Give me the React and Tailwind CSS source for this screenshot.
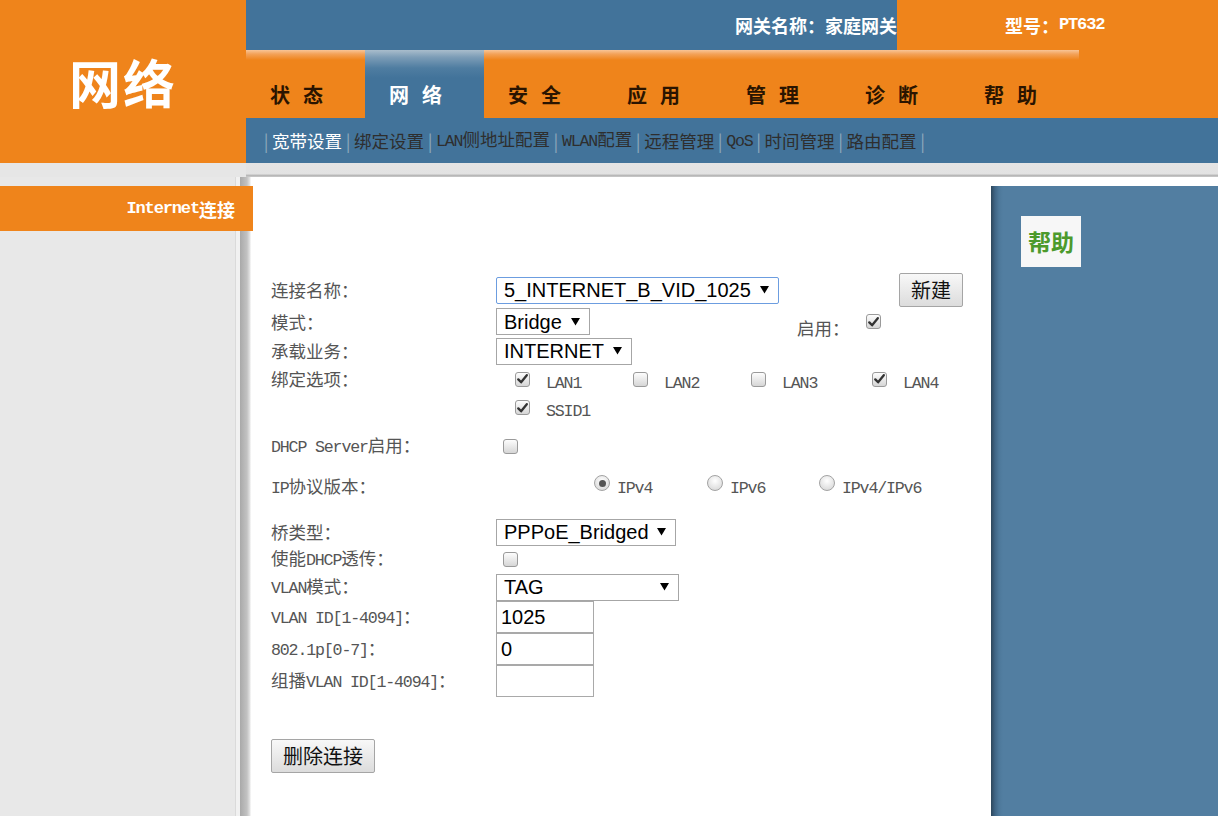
import React from "react";

function Mix({ t }) {
  const parts = t.match(/[\x00-\x7F]+|[^\x00-\x7F]+/g) || [];
  return (
    <>
      {parts.map((p, i) =>
        /^[\x00-\x7F]/.test(p) ? (
          <span key={i} className="font-['Liberation_Mono',monospace] text-[0.95em] tracking-[-0.07em] whitespace-pre">
            {p}
          </span>
        ) : (
          <span key={i}>{p}</span>
        )
      )}
    </>
  );
}

function Cb({ on }) {
  return (
    <span className="inline-flex w-[15px] h-[15px] shrink-0 rounded-[3px] border border-[#9a9a9a] bg-[linear-gradient(to_bottom,#fdfdfd,#d6d6d6)] items-center justify-center">
      {on && (
        <svg width="11" height="10" viewBox="0 0 11 10">
          <path d="M1.3 5.4 L4.1 8.3 L9.8 1.2" stroke="#333" strokeWidth="2.3" fill="none" strokeLinecap="round" strokeLinejoin="round" />
        </svg>
      )}
    </span>
  );
}

function Radio({ on }) {
  return (
    <span className="inline-flex w-[16px] h-[16px] shrink-0 rounded-full border border-[#a3a3a3] bg-[radial-gradient(circle_at_50%_35%,#ffffff,#d2d2d2)] items-center justify-center">
      {on && <span className="w-[7px] h-[7px] rounded-full bg-[#555]" />}
    </span>
  );
}

function Arrow() {
  return (
    <svg width="9" height="8" viewBox="0 0 9 8" className="shrink-0">
      <polygon points="0,0 9,0 4.5,7.5" fill="#000" />
    </svg>
  );
}

function Sel({ w, text, focus }) {
  return (
    <div
      className={
        (focus ? "border-[#6c9de0] rounded-[2px] " : "border-[#a6a6a6] ") +
        w +
        " h-[27px] border bg-white flex items-center justify-between pl-[7px] pr-[9px] font-['Liberation_Sans',Arial,sans-serif] text-[20px] leading-none text-black"
      }
    >
      <span>{text}</span>
      <Arrow />
    </div>
  );
}

function Btn({ children }) {
  return (
    <div className="h-[34px] px-[11px] flex items-center border border-[#a5a5a5] rounded-[2px] bg-[linear-gradient(to_bottom,#f8f8f8,#dcdcdc)] text-[20px] leading-none text-[#111] font-['Noto_Sans_CJK_SC',sans-serif]">
      {children}
    </div>
  );
}

function Label({ t }) {
  return (
    <div className="w-[225px] shrink-0 text-[17.5px] leading-none text-[#555] whitespace-nowrap">
      <Mix t={t} />
    </div>
  );
}

function Opt({ t }) {
  return (
    <span className="text-[17.5px] leading-none text-[#555] mt-[6px] whitespace-nowrap">
      <Mix t={t} />
    </span>
  );
}

function Inp({ v }) {
  return (
    <div className="w-[98px] h-[32px] border border-[#a9a9a9] bg-white flex items-center pl-[4px] font-['Liberation_Sans',Arial,sans-serif] text-[20px] leading-none text-black">
      {v}
    </div>
  );
}

const tabs = ["状态", "网络", "安全", "应用", "管理", "诊断", "帮助"];
const subs = ["宽带设置", "绑定设置", "LAN侧地址配置", "WLAN配置", "远程管理", "QoS", "时间管理", "路由配置"];

export default function App() {
  return (
    <div className="w-[1218px] h-[816px] overflow-hidden bg-[#e8e8e8] font-['Noto_Sans_CJK_SC',sans-serif]">
      {/* Header */}
      <div className="flex h-[163px]">
        <div className="w-[246px] shrink-0 bg-[#ef841b] flex items-center justify-center">
          <span className="text-white text-[52px] font-bold leading-none tracking-[2px]">网络</span>
        </div>
        <div className="flex-1 flex flex-col">
          <div className="flex h-[50px]">
            <div className="w-[651px] bg-[#42739a] flex items-center justify-end text-white text-[18px] font-bold leading-none">
              网关名称：家庭网关
            </div>
            <div className="flex-1 bg-[#ef841b] flex items-center pl-[108px] text-white text-[18px] font-bold leading-none">
              <Mix t="型号：PT632" />
            </div>
          </div>
          <div className="flex h-[68px] bg-[#ef841b]">
            {tabs.map((t, i) => (
              <div
                key={t}
                className={
                  i === 1
                    ? "w-[119px] h-full bg-[linear-gradient(to_bottom,#a9bdcc_0px,#7d9db7_7px,#4f7da1_18px,#42739a_28px)] text-white"
                    : "w-[119px] h-full bg-[linear-gradient(to_bottom,#f8c597_0px,#f3a259_4px,#ef841b_10px)] text-[#2a1400]"
                }
              >
                <span className="block pl-[24px] pt-[33px] text-[20px] leading-[24px] font-bold tracking-[13px]">{t}</span>
              </div>
            ))}
          </div>
          <div className="h-[45px] bg-[#42739a] flex items-center pl-[14px] text-[17.5px] leading-none whitespace-nowrap">
            {subs.map((s, i) => (
              <React.Fragment key={s}>
                <span className="inline-block w-[12px] text-center text-[#8fa8bc]">|</span>
                <span className={i === 0 ? "text-white" : "text-[#2e2e2e]"}>
                  <Mix t={s} />
                </span>
              </React.Fragment>
            ))}
            <span className="inline-block w-[12px] text-center text-[#8fa8bc]">|</span>
          </div>
        </div>
      </div>

      {/* gray band */}
      <div className="flex h-[14px]">
        <div className="w-[246px] bg-[#e6e6e6]" />
        <div className="flex-1 bg-[linear-gradient(to_bottom,#e4e4e4_0px,#e2e2e2_11px,#bdbdbd_12px,#b2b2b2_13px,#d6d6d6_14px)]" />
      </div>

      {/* Body */}
      <div className="flex h-[639px]">
        <div className="w-[253px] shrink-0 pt-[9px] bg-[linear-gradient(to_right,#e8e8e8_235px,#dadada_235px,#dadada_236px,#f1f1f1_236px,#f1f1f1_240px,#a9a9a9_240px,#c2c2c2_247px,#e4e4e4_250px,#ffffff_251px)]">
          <div className="h-[45px] bg-[#ef841b] flex items-center justify-end pr-[18px] text-white text-[18px] font-bold leading-none">
            <Mix t="Internet连接" />
          </div>
        </div>

        <div className="w-[738px] shrink-0 bg-white pl-[18px] pt-[97px] flex flex-col">
          {/* row 1 */}
          <div className="h-[32px] flex items-center">
            <Label t="连接名称：" />
            <Sel w="w-[283px]" text="5_INTERNET_B_VID_1025" focus />
            <div className="ml-[120px]">
              <Btn>新建</Btn>
            </div>
          </div>
          {/* row 2 */}
          <div className="h-[31px] flex items-center">
            <Label t="模式：" />
            <Sel w="w-[94px]" text="Bridge" />
            <span className="ml-[207px] w-[69px] mt-[13px] text-[17.5px] leading-none text-[#555]">启用：</span>
            <Cb on />
          </div>
          {/* row 3 */}
          <div className="h-[28px] flex items-center">
            <Label t="承载业务：" />
            <Sel w="w-[136px]" text="INTERNET" />
          </div>
          {/* row 4 */}
          <div className="h-[28px] flex items-center">
            <Label t="绑定选项：" />
            <div className="flex items-center pl-[19px]">
              <div className="w-[118px] flex items-center gap-[16px]">
                <Cb on />
                <Opt t="LAN1" />
              </div>
              <div className="w-[118px] flex items-center gap-[16px]">
                <Cb />
                <Opt t="LAN2" />
              </div>
              <div className="w-[121px] flex items-center gap-[16px]">
                <Cb />
                <Opt t="LAN3" />
              </div>
              <div className="flex items-center gap-[16px]">
                <Cb on />
                <Opt t="LAN4" />
              </div>
            </div>
          </div>
          {/* row 5 */}
          <div className="h-[29px] flex items-center">
            <div className="w-[225px] shrink-0" />
            <div className="flex items-center pl-[19px] gap-[16px]">
              <Cb on />
              <Opt t="SSID1" />
            </div>
          </div>
          {/* row 6 */}
          <div className="mt-[10px] h-[28px] flex items-center">
            <Label t="DHCP Server启用：" />
            <div className="pl-[7px] flex items-center">
              <Cb />
            </div>
          </div>
          {/* row 7 */}
          <div className="mt-[13px] h-[28px] flex items-center">
            <Label t="IP协议版本：" />
            <div className="flex items-center pl-[98px]">
              <div className="w-[113px] flex items-center gap-[7px]">
                <span className="mb-[8px] flex">
                  <Radio on />
                </span>
                <span className="text-[17.5px] leading-none text-[#555]">
                  <Mix t="IPv4" />
                </span>
              </div>
              <div className="w-[112px] flex items-center gap-[7px]">
                <span className="mb-[8px] flex">
                  <Radio />
                </span>
                <span className="text-[17.5px] leading-none text-[#555]">
                  <Mix t="IPv6" />
                </span>
              </div>
              <div className="flex items-center gap-[7px]">
                <span className="mb-[8px] flex">
                  <Radio />
                </span>
                <span className="text-[17.5px] leading-none text-[#555]">
                  <Mix t="IPv4/IPv6" />
                </span>
              </div>
            </div>
          </div>
          {/* row 8 */}
          <div className="mt-[17px] h-[28px] flex items-center">
            <Label t="桥类型：" />
            <Sel w="w-[180px]" text="PPPoE_Bridged" />
          </div>
          {/* row 9 */}
          <div className="h-[27px] flex items-center">
            <Label t="使能DHCP透传：" />
            <div className="pl-[7px] flex items-center">
              <Cb />
            </div>
          </div>
          {/* row 10 */}
          <div className="h-[28px] flex items-center">
            <Label t="VLAN模式：" />
            <Sel w="w-[183px]" text="TAG" />
          </div>
          {/* rows 11-13 */}
          <div className="h-[32px] flex items-center">
            <Label t="VLAN ID[1-4094]：" />
            <Inp v="1025" />
          </div>
          <div className="h-[32px] flex items-center">
            <Label t="802.1p[0-7]：" />
            <Inp v="0" />
          </div>
          <div className="h-[32px] flex items-center">
            <Label t="组播VLAN ID[1-4094]：" />
            <Inp v="" />
          </div>
          <div className="mt-[42px] flex">
            <Btn>删除连接</Btn>
          </div>
        </div>

        <div className="flex-1 bg-white pt-[9px]">
          <div className="h-full bg-[linear-gradient(to_right,#2d475c_0px,#3f6585_4px,#4d789a_8px,#527ea1_12px)] pt-[30px] pl-[30px]">
            <div className="w-[60px] h-[51px] bg-[#f7f7f7] flex items-center justify-center text-[#4c9a2c] text-[23px] font-bold leading-none">
              帮助
            </div>
          </div>
        </div>
      </div>
    </div>
  );
}
